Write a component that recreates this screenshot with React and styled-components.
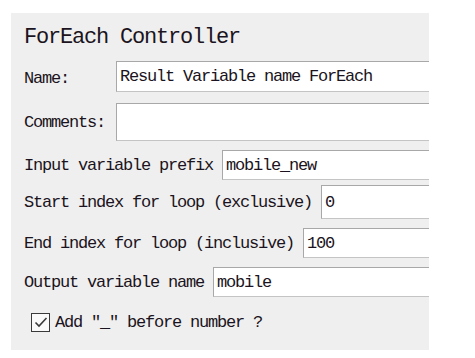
import React from 'react'
import styled, { createGlobalStyle } from 'styled-components'

const Global = createGlobalStyle`
  body {
    margin: 0;
    background: #ffffff;
  }
`

const Panel = styled.div`
  margin: 13px 0 0 11px;
  width: 418px;
  height: 337px;
  background: #efefef;
  box-sizing: border-box;
  padding: 12px 0 0 13px;
  display: flex;
  flex-direction: column;
  overflow: hidden;
  font-family: "Liberation Mono", "DejaVu Sans Mono", monospace;
  color: #1b1420;
`

const Title = styled.div`
  font-size: 22px;
  letter-spacing: -1.2px;
  height: 30px;
  line-height: 26px;
`

const Row = styled.div`
  display: flex;
  align-items: center;
  height: ${p => p.$h}px;
  margin-top: ${p => p.$top}px;
  font-size: 17px;
  letter-spacing: -1.2px;
`

const Label = styled.span`
  flex: none;
  width: ${p => (p.$w ? `${p.$w}px` : 'auto')};
  margin-right: ${p => (p.$w ? 0 : 9)}px;
  padding-top: ${p => p.$shift || 0}px;
  white-space: pre;
`

const Field = styled.div`
  flex: 1;
  align-self: stretch;
  background: #ffffff;
  border: 1px solid #a8a8a8;
  border-bottom-color: #c4c4c4;
  border-right: none;
  display: flex;
  align-items: center;
  padding-left: 3px;
  white-space: pre;
`

const Check = styled.span`
  width: 17px;
  height: 17px;
  border: 1px solid #3a3a3a;
  background: #fafafa;
  margin: 0 5px 0 7px;
  display: flex;
  align-items: center;
  justify-content: center;
`

const rows = [
  { label: 'Input variable prefix', value: 'mobile_new', h: 30, top: 9 },
  { label: 'Start index for loop (exclusive)', value: '0', h: 34, top: 5 },
  { label: 'End index for loop (inclusive)', value: '100', h: 30, top: 9 },
  { label: 'Output variable name', value: 'mobile', h: 30, top: 9 },
]

const App = () => {
  return (
    <>
      <Global />
      <Panel>
        <Title>ForEach Controller</Title>
        <Row $h={31} $top={6}>
          <Label $w={92} $shift={4}>Name:</Label>
          <Field>Result Variable name ForEach</Field>
        </Row>
        <Row $h={38} $top={11}>
          <Label $w={92}>Comments:</Label>
          <Field />
        </Row>
        {rows.map(r => (
          <Row key={r.label} $h={r.h} $top={r.top}>
            <Label>{r.label}</Label>
            <Field>{r.value}</Field>
          </Row>
        ))}
        <Row $h={20} $top={15}>
          <Check>
            <svg width="14" height="12" viewBox="0 0 14 12">
              <path d="M1.5 6.5 L5 10 L12.5 2" fill="none" stroke="#3a3a3a" strokeWidth="1.6" />
            </svg>
          </Check>
          <Label>Add "_" before number ?</Label>
        </Row>
      </Panel>
    </>
  )
}

export default App
